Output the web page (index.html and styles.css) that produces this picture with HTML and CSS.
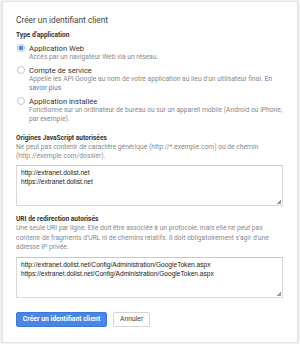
FILE: index.html
```html
<!DOCTYPE html>
<html lang="fr">
<head>
    <meta charset="UTF-8">
    <title>Créer un identifiant client</title>
    <link rel="stylesheet" href="styles.css">
</head>
<body>
    <div class="card">
        <h1>Créer un identifiant client</h1>
        <div class="label">Type d'application</div>
        <div class="option">
            <span class="radio checked"></span>
            <div class="option-body">
                <div class="option-title">Application Web</div>
                <div class="hint">Accès par un navigateur Web via un réseau.</div>
            </div>
        </div>
        <div class="option">
            <span class="radio"></span>
            <div class="option-body">
                <div class="option-title">Compte de service</div>
                <div class="hint">Appelle les API Google au nom de votre application au lieu d'un utilisateur final. <a href="#">En savoir plus</a></div>
            </div>
        </div>
        <div class="option">
            <span class="radio"></span>
            <div class="option-body">
                <div class="option-title">Application installée</div>
                <div class="hint">Fonctionne sur un ordinateur de bureau ou sur un appareil mobile (Android ou iPhone, par exemple).</div>
            </div>
        </div>

        <div class="field">
            <div class="label">Origines JavaScript autorisées</div>
            <div class="hint">Ne peut pas contenir de caractère générique (http://*.exemple.com) ou de chemin (http://exemple.com/dossier).</div>
            <div class="textarea">http://extranet.dolist.net<br>https://extranet.dolist.net</div>
        </div>

        <div class="field field-uri">
            <div class="label">URI de redirection autorisés</div>
            <div class="hint">Une seule URI par ligne. Elle doit être associée à un protocole, mais elle ne peut pas contenir de fragments d'URL ni de chemins relatifs. Il doit obligatoirement s'agir d'une adresse IP privée.</div>
            <div class="textarea">http://extranet.dolist.net/Config/Administration/GoogleToken.aspx<br>https://extranet.dolist.net/Config/Administration/GoogleToken.aspx</div>
        </div>

        <div class="actions">
            <button class="btn btn-primary">Créer un identifiant client</button>
            <button class="btn">Annuler</button>
        </div>
    </div>
</body>
</html>
```

FILE: styles.css
```css
body {
    margin: 0;
    background: #f2f2f2;
    font-family: Roboto, 'Liberation Sans', sans-serif;
    color: #444;
}
.card {
    margin: 1px 2px 0 2px;
    height: 342px;
    box-sizing: border-box;
    background: #fff;
    border: 1px solid #e2e2e2;
    box-shadow: 0 1px 2px rgba(0, 0, 0, 0.08);
    padding: 12.5px 14px 0 13px;
}
h1 {
    margin: 0 0 5px 0;
    font-size: 8.3px;
    font-weight: 400;
    line-height: 11px;
    color: #444;
}
.label {
    font-size: 6.6px;
    font-weight: 700;
    line-height: 9px;
    color: #333;
}
.option {
    display: flex;
    gap: 4px;
    margin-top: 4px;
}
.radio {
    flex: none;
    box-sizing: border-box;
    width: 8px;
    height: 8px;
    margin: 0.5px 0 0 1px;
    border: 1px solid #c4c4c4;
    border-radius: 50%;
}
.radio.checked {
    border-color: #a9c4f2;
    background: radial-gradient(circle, #4a86e8 0, #4a86e8 2px, #fff 2.6px);
}
.option-title {
    font-size: 7.6px;
    line-height: 9px;
    color: #333;
}
.hint {
    font-size: 6.7px;
    line-height: 9px;
    color: #8a8a8a;
}
.hint a {
    color: #4a7ad0;
    text-decoration: none;
}
.field {
    margin-top: 10px;
}
.field-uri {
    margin-top: 9.5px;
}
.field-uri .hint {
    line-height: 9.5px;
}
.textarea {
    margin-top: 4px;
    height: 41px;
    box-sizing: border-box;
    border: 1px solid #d9d9d9;
    border-top-color: #c8c8c8;
    padding: 2px 4px;
    font-family: 'Liberation Sans', Arial, sans-serif;
    font-size: 6.6px;
    line-height: 9px;
    color: #222;
    position: relative;
}
.textarea::after {
    content: '';
    position: absolute;
    right: 1px;
    bottom: 1px;
    width: 4px;
    height: 4px;
    background: linear-gradient(135deg, transparent 50%, #999 50%);
}
.actions {
    display: flex;
    gap: 6px;
    margin-top: 14px;
}
.btn {
    height: 15px;
    padding: 0 6px;
    border: 1px solid #d4d4d4;
    border-radius: 2px;
    background: #fff;
    font-family: Roboto, 'Liberation Sans', sans-serif;
    font-size: 6.8px;
    color: #444;
}
.btn-primary {
    width: 91px;
    padding: 0;
    background: #4a86e8;
    border-color: #3c78d8;
    color: #fff;
    font-weight: 700;
}
```
